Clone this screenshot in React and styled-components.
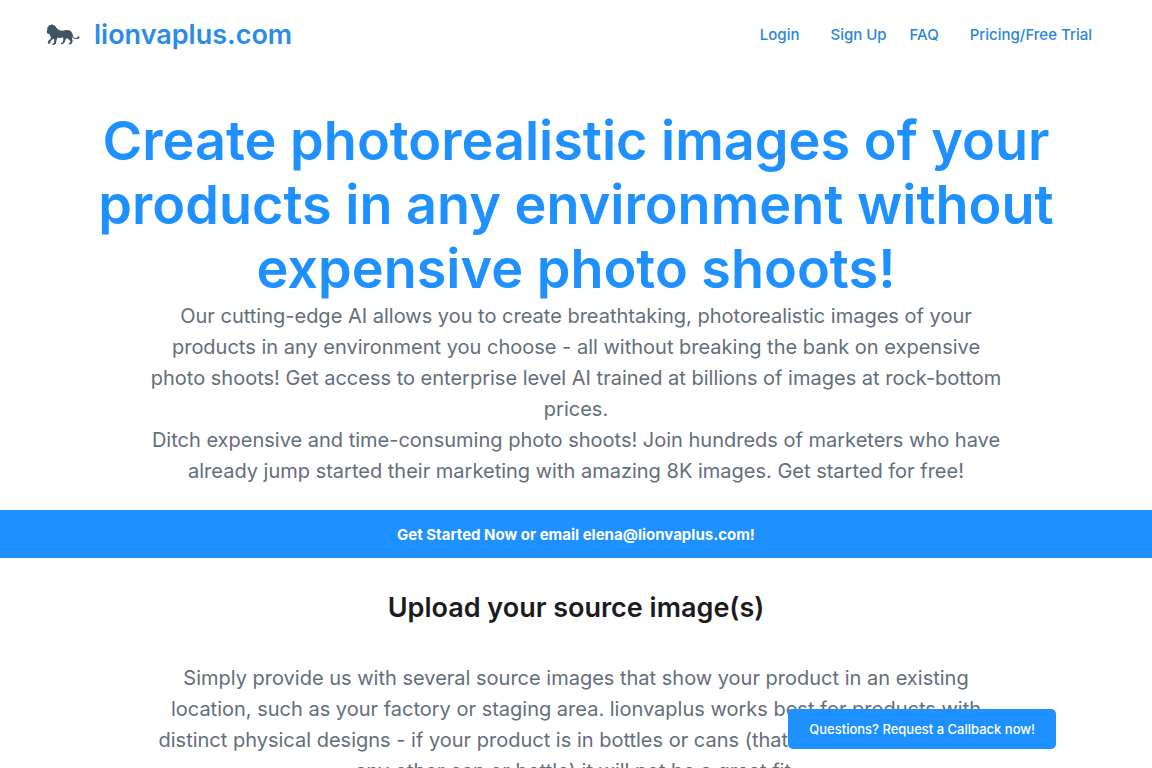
import React from "react";
import styled, { createGlobalStyle } from "styled-components";

const GlobalStyle = createGlobalStyle`
  *, *::before, *::after { box-sizing: border-box; }
  body {
    margin: 0;
    background: #fff;
    color: #1c1c1e;
    font-family: Inter, "Liberation Sans", sans-serif;
  }
  h1, h2, p { margin: 0; }
`;

const Header = styled.header`
  display: flex;
  align-items: center;
  justify-content: space-between;
  height: 70px;
  padding: 0 60px 0 46px;
`;

const Brand = styled.a`
  display: flex;
  align-items: center;
  gap: 14px;
  color: #2b8ce6;
  font-size: 27px;
  font-weight: 600;
  line-height: 32px;
  text-decoration: none;
`;

const Nav = styled.nav`
  display: flex;
  align-items: center;
  gap: 31px;
`;

const NavGroup = styled.div`
  display: flex;
  gap: 23px;
`;

const NavLink = styled.a`
  color: #2b86d9;
  font-size: 15px;
  font-weight: 500;
  line-height: 24px;
  text-decoration: none;
`;

const Hero = styled.section`
  padding: 39px 96px 23px;
  text-align: center;
`;

const Title = styled.h1`
  color: #1e90ff;
  font-size: 54px;
  font-weight: 600;
  line-height: 64px;
`;

const Copy = styled.div`
  max-width: 864px;
  margin: 0 auto;
`;

const Text = styled.p`
  color: #626e7b;
  font-size: 20px;
  line-height: 31px;
`;

const Banner = styled.button`
  display: block;
  width: 100%;
  height: 48px;
  padding: 0;
  border: 0;
  background: #1e90ff;
  color: #fff;
  font-family: inherit;
  font-size: 15px;
  font-weight: 700;
  cursor: pointer;
`;

const Step = styled.section`
  padding: 32px 96px;
  text-align: center;
`;

const StepTitle = styled.h2`
  margin-bottom: 37px;
  font-size: 27px;
  font-weight: 600;
  line-height: 36px;
`;

const Callback = styled.button`
  position: fixed;
  right: 96px;
  bottom: 19px;
  height: 40px;
  padding: 0 21px;
  border: 0;
  border-radius: 5px;
  background: #1e90ff;
  color: #fff;
  font-family: inherit;
  font-size: 13px;
  font-weight: 500;
  cursor: pointer;
`;

function Lion() {
  return (
    <svg width="34" height="22" viewBox="31 36 102 66" fill="#3f5360" aria-hidden="true">
      <path d="M33 58 L35 53 L34 48 L38 44 L40 39 L44 40 L49 37 L54 40 L59 42 L62 47 L66 51 L71 55 L80 56 L91 54 L101 55 L107 59 L111 67 L113 75 L118 78 L124 77 L125 74 L130 73 L132 77 L128 80 L122 81 L115 80 L110 75 L109 80 L111 86 L109 94 L104 97 L98 97 L100 94 L104 91 L104 87 L97 80 L93 78 L89 84 L87 91 L82 96 L75 97 L77 93 L81 91 L83 83 L82 76 L74 78 L65 77 L63 84 L61 91 L61 95 L56 98 L49 98 L51 95 L55 92 L56 83 L53 80 L48 84 L44 89 L44 94 L39 96 L36 92 L38 86 L45 80 L46 75 L43 71 L42 65 L38 66 L34 63 Z" />
    </svg>
  );
}

export default function App() {
  return (
    <>
      <GlobalStyle />
      <Header>
        <Brand href="#">
          <Lion />
          lionvaplus.com
        </Brand>
        <Nav>
          <NavLink href="#login">Login</NavLink>
          <NavGroup>
            <NavLink href="#signup">Sign Up</NavLink>
            <NavLink href="#faq">FAQ</NavLink>
          </NavGroup>
          <NavLink href="#pricing">Pricing/Free Trial</NavLink>
        </Nav>
      </Header>
      <main>
        <Hero>
          <Title>
            Create photorealistic images of your products in any environment
            without expensive photo shoots!
          </Title>
          <Copy>
            <Text>
              Our cutting-edge AI allows you to create breathtaking,
              photorealistic images of your products in any environment you
              choose - all without breaking the bank on expensive photo shoots!
              Get access to enterprise level AI trained at billions of images at
              rock-bottom prices.
            </Text>
            <Text>
              Ditch expensive and time-consuming photo shoots! Join hundreds of
              marketers who have already jump started their marketing with
              amazing 8K images. Get started for free!
            </Text>
          </Copy>
        </Hero>
        <Banner type="button">
          Get Started Now or email elena@lionvaplus.com!
        </Banner>
        <Step>
          <StepTitle>Upload your source image(s)</StepTitle>
          <Copy>
            <Text>
              Simply provide us with several source images that show your
              product in an existing location, such as your factory or staging
              area. lionvaplus works best for products with distinct physical
              designs - if your product is in bottles or cans (that can look
              the same as any other can or bottle) it will not be a great fit.
            </Text>
          </Copy>
        </Step>
      </main>
      <Callback type="button">Questions? Request a Callback now!</Callback>
    </>
  );
}
